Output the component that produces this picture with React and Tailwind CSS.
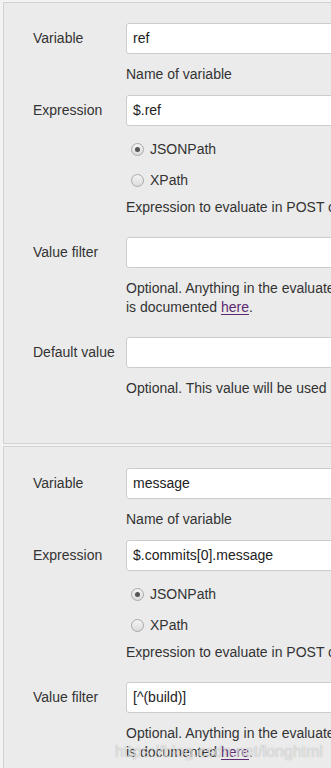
const font = { fontFamily: '"Liberation Sans", Arial, sans-serif' };

const Radio = ({ checked, label }) => (
  <div className="flex items-center h-[31px]">
    <span className="ml-[5px] w-[13px] h-[13px] rounded-full border border-[#a9a9a9] bg-gradient-to-b from-[#f4f4f4] to-[#dcdcdc] flex items-center justify-center">
      {checked && <span className="w-[5px] h-[5px] rounded-full bg-[#555]" />}
    </span>
    <span className="ml-[6px]">{label}</span>
  </div>
);

const Field = ({ label, value, className = '' }) => (
  <div className={`flex ${className}`}>
    <div className="w-[122px] shrink-0 pl-[29px] pt-[5px] whitespace-nowrap">{label}</div>
    <div className="w-[420px] h-[31px] shrink-0 bg-white border border-[#cccccc] rounded-[3px] pl-[6px] flex items-center text-[#222]">
      {value}
    </div>
  </div>
);

const Help = ({ children, className = '' }) => (
  <div className={`pl-[122px] leading-[20px] whitespace-nowrap ${className}`}>{children}</div>
);

const Link = () => (
  <a className="text-[#5b2a72] underline underline-offset-2 decoration-[#5b2a72]">here</a>
);

const Panel = ({ data, last }) => (
  <div className={`border border-[#d2d2d2] bg-[#ebebeb] w-[600px] ${last ? 'pt-[21px] pb-[60px]' : 'pt-[20px] h-[442px]'}`}>
    <Field label="Variable" value={data.variable} />
    <Help className="mt-[10px]">Name of variable</Help>
    <Field label="Expression" value={data.expression} className="mt-[11px]" />
    <div className="pl-[122px] mt-[8px]">
      <Radio checked label="JSONPath" />
      <Radio label="XPath" />
    </div>
    <Help className="mt-[1px]">Expression to evaluate in POST content. Use JSONPath for JSON or XPath for XML.</Help>
    <Field label="Value filter" value={data.filter} className="mt-[20px]" />
    <Help className="mt-[10px]">Optional. Anything in the evaluated value, matching this regular expression, will be removed.</Help>
    <Help className="-mt-[1px]">
      is documented <Link />.
    </Help>
    {!last && (
      <>
        <Field label="Default value" value="" className="mt-[20px]" />
        <Help className="mt-[10px]">Optional. This value will be used if the expression does not resolve.</Help>
      </>
    )}
  </div>
);

export default function App() {
  return (
    <div
      className="relative w-[331px] h-[768px] overflow-hidden bg-[#f3f3f3] pl-[3px] pt-[2px] text-[14px] text-[#333]"
      style={font}
    >
      <div className="flex flex-col gap-[2px]">
        <Panel data={{ variable: 'ref', expression: '$.ref', filter: '' }} />
        <Panel data={{ variable: 'message', expression: '$.commits[0].message', filter: '[^(build)]' }} last />
      </div>
      <div className="absolute left-[115px] top-[740px] text-[16px] text-white/70 whitespace-nowrap [text-shadow:0_0_1px_rgba(0,0,0,0.35)]">
        https://blog.csdn.net/longhtml
      </div>
    </div>
  );
}
